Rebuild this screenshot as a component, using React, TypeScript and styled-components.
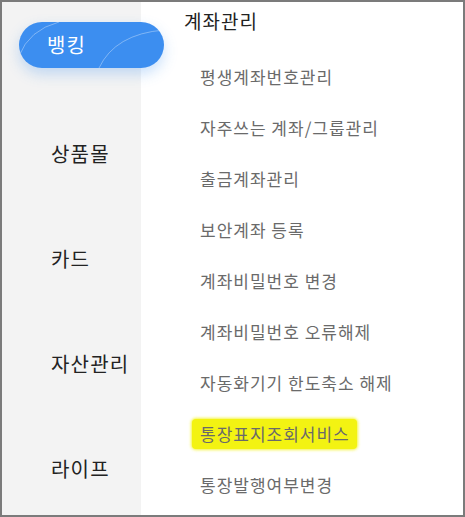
import React from 'react';
import styled, { createGlobalStyle } from 'styled-components';

const GlobalStyle = createGlobalStyle`
  html, body {
    margin: 0;
    padding: 0;
    background: #ffffff;
  }
  * {
    box-sizing: border-box;
  }
`;

const sideMenus = ['상품몰', '카드', '자산관리', '라이프'];

const accountMenus = [
  '평생계좌번호관리',
  '자주쓰는 계좌/그룹관리',
  '출금계좌관리',
  '보안계좌 등록',
  '계좌비밀번호 변경',
  '계좌비밀번호 오류해제',
  '자동화기기 한도축소 해제',
  '통장표지조회서비스',
  '통장발행여부변경',
];

const highlighted = '통장표지조회서비스';

export default function App() {
  return (
    <>
      <GlobalStyle />
      <Frame>
        <Sidebar>
          <ActivePill>
            <PillArcs viewBox="0 0 145 46" preserveAspectRatio="none">
              <path d="M0 34 Q10 8 40 0" />
              <path d="M80 46 Q96 12 145 8" />
            </PillArcs>
            <PillLabel>뱅킹</PillLabel>
          </ActivePill>
          <SideList>
            {sideMenus.map((m) => (
              <SideItem key={m}>{m}</SideItem>
            ))}
          </SideList>
        </Sidebar>
        <Content>
          <SectionTitle>계좌관리</SectionTitle>
          <MenuList>
            {accountMenus.map((m) => (
              <MenuRow key={m}>
                <MenuText marked={m === highlighted}>{m}</MenuText>
              </MenuRow>
            ))}
          </MenuList>
        </Content>
      </Frame>
    </>
  );
}

const Frame = styled.div`
  display: flex;
  width: 465px;
  height: 517px;
  border: 2px solid #7b7b7b;
  overflow: hidden;
  font-family: 'Noto Sans CJK KR', 'Noto Sans', sans-serif;
  background: #ffffff;
`;

const Sidebar = styled.nav`
  position: relative;
  z-index: 1;
  display: flex;
  flex-direction: column;
  width: 139px;
  flex-shrink: 0;
  padding-top: 20px;
  background: #f3f3f3;
`;

const ActivePill = styled.div`
  position: relative;
  display: flex;
  flex-shrink: 0;
  align-items: center;
  width: 145px;
  height: 46px;
  margin-left: 17px;
  padding-left: 28px;
  border-radius: 23px;
  background: #3c8ef0;
  box-shadow: 0 6px 14px rgba(60, 142, 240, 0.28);
  overflow: hidden;
`;

const PillArcs = styled.svg`
  position: absolute;
  inset: 0;
  width: 100%;
  height: 100%;
  fill: none;
  stroke: rgba(255, 255, 255, 0.35);
  stroke-width: 1;
`;

const PillLabel = styled.span`
  position: relative;
  color: #ffffff;
  font-size: 20px;
  line-height: 24px;
  letter-spacing: 1.2px;
`;

const SideList = styled.ul`
  flex-shrink: 0;
  list-style: none;
  margin: 33px 0 0;
  padding: 0;
`;

const SideItem = styled.li`
  display: flex;
  align-items: center;
  height: 105px;
  padding-left: 49px;
  color: #222222;
  font-size: 20px;
  letter-spacing: 1.2px;
`;

const Content = styled.main`
  flex: 1;
  padding: 7px 0 0 43px;
`;

const SectionTitle = styled.h2`
  margin: 0;
  color: #222222;
  font-size: 19px;
  font-weight: 400;
  line-height: 24px;
  letter-spacing: 1px;
`;

const MenuList = styled.ul`
  list-style: none;
  margin: 18px 0 0;
  padding: 0;
`;

const MenuRow = styled.li`
  display: flex;
  align-items: center;
  height: 51px;
  padding-left: 8px;
`;

const MenuText = styled.span<{ marked: boolean }>`
  padding: 3px 7px 3px 8px;
  color: #6a6a6a;
  font-size: 17px;
  line-height: 24px;
  letter-spacing: 1px;
  border-radius: 4px;
  background: ${({ marked }) => (marked ? '#f3f312' : 'transparent')};
  box-shadow: ${({ marked }) => (marked ? '0 0 3px 1px rgba(243, 243, 18, 0.8)' : 'none')};
`;
